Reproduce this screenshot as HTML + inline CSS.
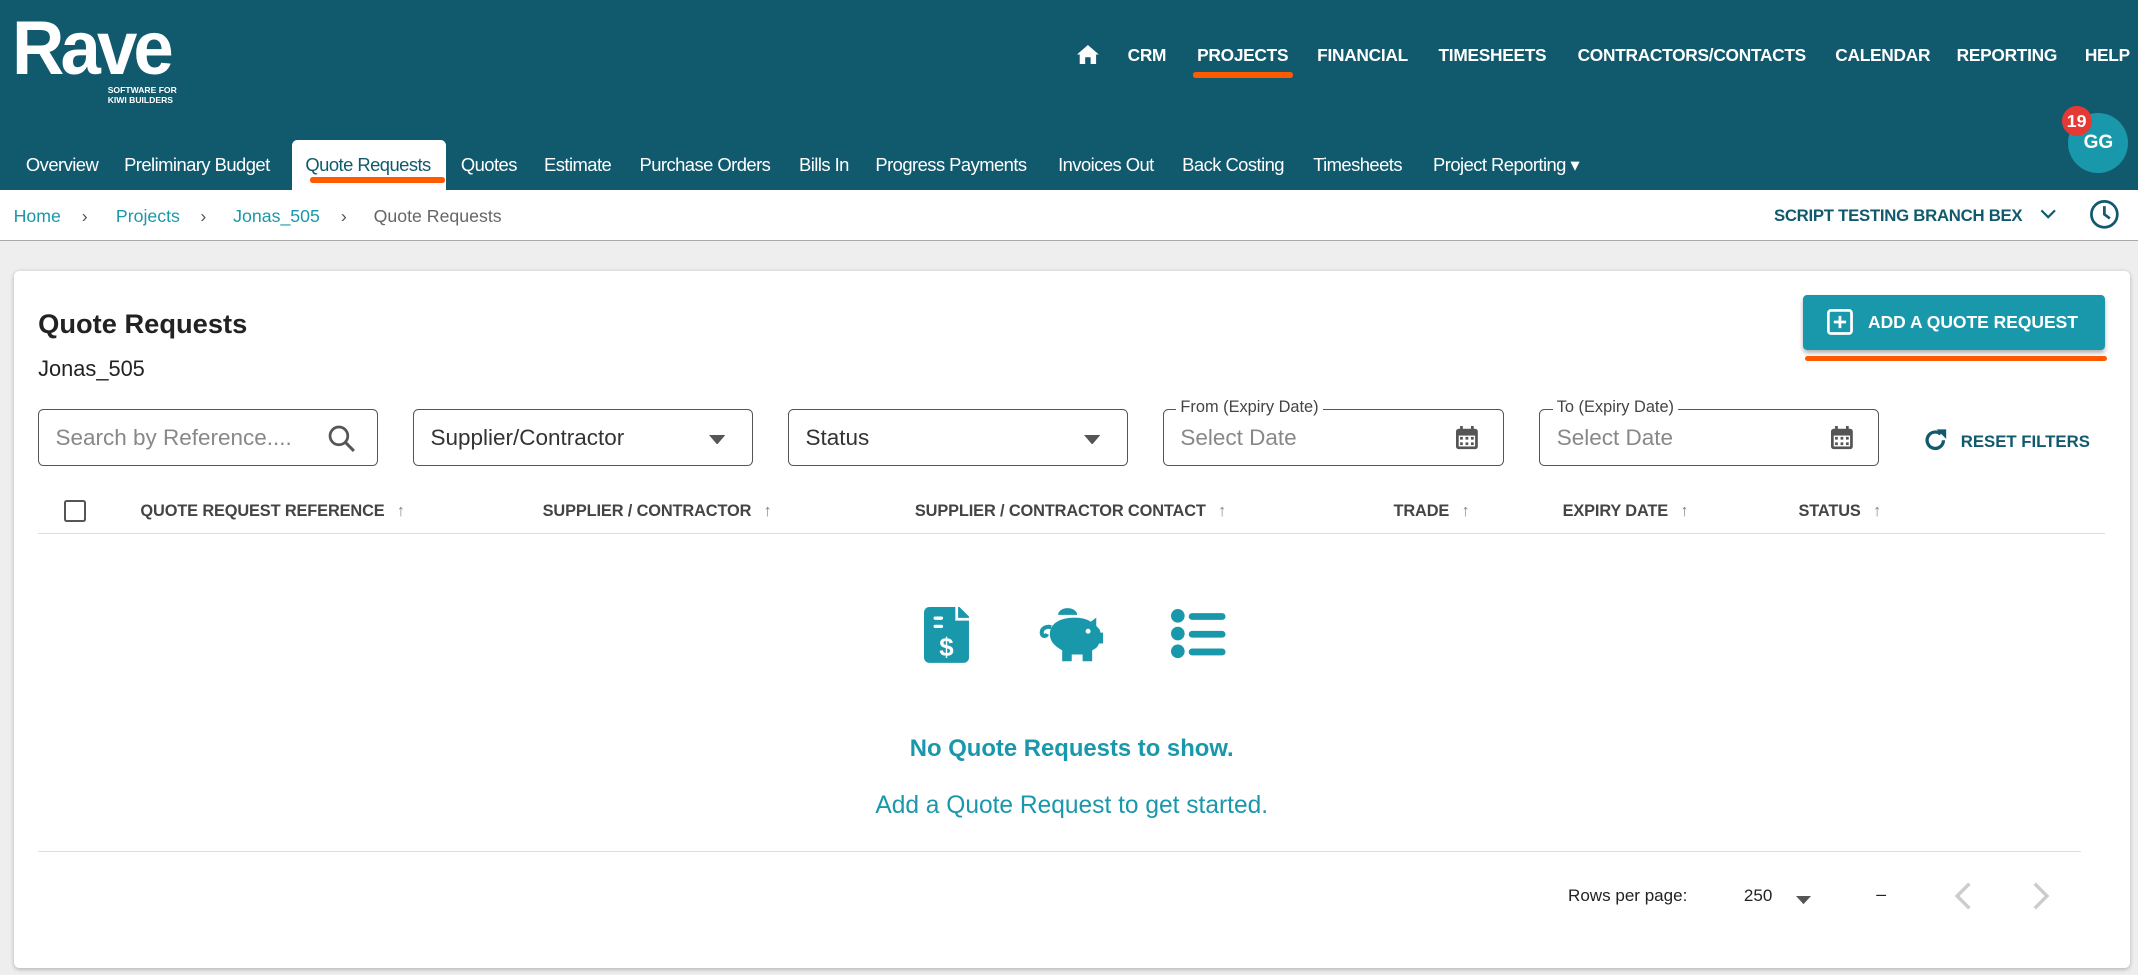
<!DOCTYPE html>
<html><head><meta charset="utf-8"><style>
html,body{margin:0;padding:0;overflow:hidden;background:#eee;}
#w{zoom:1.36352;width:1568px;height:715px;position:relative;font-family:"Liberation Sans",Arial,sans-serif;background:#eeeeee;}
.hdr{position:absolute;left:0;top:0;width:1568px;height:139px;background:#115a6e;color:#fff;}
.abs{position:absolute;}
.top a{position:absolute;top:33px;font-weight:bold;font-size:12.7px;color:#fff;letter-spacing:-0.2px}
.tab{position:absolute;top:113px;font-size:13.5px;color:#fff;letter-spacing:-0.4px}
.crumb{position:absolute;left:0;top:139px;width:1568px;height:37px;background:#fff;border-bottom:1px solid #aaa;font-size:13px;}
.card{position:absolute;left:10px;top:199px;width:1552px;height:511px;background:#fff;border-radius:4px;box-shadow:0 1px 3px rgba(0,0,0,.25);}
.inp{position:absolute;top:101px;height:42px;border:1px solid #555;border-radius:4px;box-sizing:border-box;font-size:16.5px;color:#333;}
.th{position:absolute;top:169px;font-size:12px;font-weight:bold;color:#444;letter-spacing:-0.1px}
.th span{color:#888;font-weight:normal;margin-left:9px}
</style></head><body><div id="w">
<div class="hdr">
 <div class="abs" style="left:9px;top:6px;font-size:56px;font-weight:bold;letter-spacing:-3px;line-height:60px;transform:scaleX(0.95);transform-origin:left">Rave</div>
 <div class="abs" style="left:79px;top:62px;font-size:6.3px;font-weight:bold;line-height:8px">SOFTWARE FOR<br>KIWI BUILDERS</div>
 <div class="top">
  <svg class="abs" style="left:790px;top:33px" width="16" height="14" viewBox="0 0 16 14"><path d="M8 0L0 7h2v7h4V9h4v5h4V7h2z" fill="#fff"/></svg>
  <a style="left:827px">CRM</a><a style="left:878px">PROJECTS</a><a style="left:966px">FINANCIAL</a><a style="left:1055px">TIMESHEETS</a><a style="left:1157px">CONTRACTORS/CONTACTS</a><a style="left:1346px">CALENDAR</a><a style="left:1435px">REPORTING</a><a style="left:1529px">HELP</a>
 </div>
 <div class="abs" style="left:875px;top:53px;width:73px;height:4px;background:#ff5a00;border-radius:2px"></div>
 <div class="abs" style="left:214px;top:103px;width:113px;height:36px;background:#fff;border-radius:4px 4px 0 0"></div>
 <div class="abs" style="left:227px;top:130px;width:99px;height:4px;background:#ff5a00;border-radius:2px"></div>
 <div class="tab" style="left:19px">Overview</div><div class="tab" style="left:91px">Preliminary Budget</div><div class="tab" style="left:224px;color:#115a6e">Quote Requests</div><div class="tab" style="left:338px">Quotes</div><div class="tab" style="left:399px">Estimate</div><div class="tab" style="left:469px">Purchase Orders</div><div class="tab" style="left:586px">Bills In</div><div class="tab" style="left:642px">Progress Payments</div><div class="tab" style="left:776px">Invoices Out</div><div class="tab" style="left:867px">Back Costing</div><div class="tab" style="left:963px">Timesheets</div><div class="tab" style="left:1051px">Project Reporting ▾</div>
 <div class="abs" style="left:1517px;top:83px;width:44px;height:44px;border-radius:50%;background:#1a98ab;font-weight:bold;font-size:14px;text-align:center;line-height:44px">GG</div>
 <div class="abs" style="left:1512px;top:78px;width:22px;height:22px;border-radius:50%;background:#e53935;font-weight:bold;font-size:13px;text-align:center;line-height:22px">19</div>
</div>
<div class="crumb">
 <div class="abs" style="left:10px;top:12px;color:#1a98ab">Home</div><div class="abs" style="left:60px;top:12px;color:#555">›</div>
 <div class="abs" style="left:85px;top:12px;color:#1a98ab">Projects</div><div class="abs" style="left:147px;top:12px;color:#555">›</div>
 <div class="abs" style="left:171px;top:12px;color:#1a98ab">Jonas_505</div><div class="abs" style="left:250px;top:12px;color:#555">›</div>
 <div class="abs" style="left:274px;top:12px;color:#666">Quote Requests</div>
 <div class="abs" style="left:1301px;top:12px;color:#115a6e;font-weight:bold;font-size:12.3px;letter-spacing:-0.2px">SCRIPT TESTING BRANCH BEX</div>
 <svg class="abs" style="left:1496px;top:14px" width="12" height="8"><path d="M1 1l5 5 5-5" stroke="#115a6e" stroke-width="1.6" fill="none"/></svg>
 <svg class="abs" style="left:1531px;top:6px" width="24" height="24"><circle cx="12" cy="12" r="9.5" stroke="#115a6e" stroke-width="2" fill="none"/><path d="M12 6v6l4 3" stroke="#115a6e" stroke-width="2" fill="none"/></svg>
</div>
<div class="card">
 <div class="abs" style="left:18px;top:27px;font-size:20px;font-weight:bold;color:#222">Quote Requests</div>
 <div class="abs" style="left:18px;top:62px;font-size:16px;color:#222">Jonas_505</div>
 <div class="abs" style="left:1312px;top:17px;width:222px;height:41px;background:#1a98ab;border-radius:3px;box-shadow:0 2px 3px rgba(0,0,0,.3);color:#fff;font-weight:bold;font-size:12.8px">
  <svg class="abs" style="left:18px;top:11px" width="19" height="19"><rect x="1" y="1" width="17" height="17" rx="2" stroke="#fff" stroke-width="2" fill="none"/><path d="M9.5 5v9M5 9.5h9" stroke="#fff" stroke-width="2"/></svg>
  <div class="abs" style="left:48px;top:13px">ADD A QUOTE REQUEST</div></div>
 <div class="abs" style="left:1314px;top:62px;width:221px;height:4px;background:#ff5a00;border-radius:2px"></div>
 <div class="inp" style="left:18px;width:249px"><span class="abs" style="left:12px;top:11px;color:#888">Search by Reference....</span>
  <svg class="abs" style="left:212px;top:11px" width="20" height="20"><circle cx="8" cy="8" r="6.5" stroke="#555" stroke-width="2" fill="none"/><path d="M13 13l6 6" stroke="#555" stroke-width="2.2"/></svg></div>
 <div class="inp" style="left:293px;width:249px"><span class="abs" style="left:12px;top:11px">Supplier/Contractor</span><svg class="abs" style="left:216px;top:18px" width="12" height="7"><path d="M0 0h12L6 7z" fill="#555"/></svg></div>
 <div class="inp" style="left:568px;width:249px"><span class="abs" style="left:12px;top:11px">Status</span><svg class="abs" style="left:216px;top:18px" width="12" height="7"><path d="M0 0h12L6 7z" fill="#555"/></svg></div>
 <div class="inp" style="left:843px;width:250px"><span class="abs" style="left:9px;top:-9px;font-size:12px;background:#fff;padding:0 3px;color:#444">From (Expiry Date)</span><span class="abs" style="left:12px;top:11px;color:#888">Select Date</span>
  <svg class="abs" style="left:214px;top:12px" width="16" height="17"><rect x="0" y="2" width="16" height="15" rx="2" fill="#555"/><path d="M4 0v4M12 0v4" stroke="#555" stroke-width="2"/><rect x="2" y="7" width="12" height="8" fill="#fff"/><g fill="#555"><rect x="3" y="8" width="2" height="2"/><rect x="7" y="8" width="2" height="2"/><rect x="11" y="8" width="2" height="2"/><rect x="3" y="12" width="2" height="2"/><rect x="7" y="12" width="2" height="2"/><rect x="11" y="12" width="2" height="2"/></g></svg></div>
 <div class="inp" style="left:1119px;width:249px"><span class="abs" style="left:9px;top:-9px;font-size:12px;background:#fff;padding:0 3px;color:#444">To (Expiry Date)</span><span class="abs" style="left:12px;top:11px;color:#888">Select Date</span>
  <svg class="abs" style="left:213px;top:12px" width="16" height="17"><rect x="0" y="2" width="16" height="15" rx="2" fill="#555"/><path d="M4 0v4M12 0v4" stroke="#555" stroke-width="2"/><rect x="2" y="7" width="12" height="8" fill="#fff"/><g fill="#555"><rect x="3" y="8" width="2" height="2"/><rect x="7" y="8" width="2" height="2"/><rect x="11" y="8" width="2" height="2"/><rect x="3" y="12" width="2" height="2"/><rect x="7" y="12" width="2" height="2"/><rect x="11" y="12" width="2" height="2"/></g></svg></div>
 <svg class="abs" style="left:1400px;top:115px" width="18" height="18"><path d="M15 9a6 6 0 1 1-2-4.5" stroke="#115a6e" stroke-width="2.4" fill="none"/><path d="M10 1h7v7z" fill="#115a6e"/></svg>
 <div class="abs" style="left:1428px;top:118px;font-size:12.3px;font-weight:bold;color:#115a6e">RESET FILTERS</div>
 <div class="abs" style="left:37px;top:168px;width:13px;height:13px;border:1.5px solid #555;border-radius:2px"></div>
 <div class="th" style="left:93px">QUOTE REQUEST REFERENCE<span>↑</span></div>
 <div class="th" style="left:388px">SUPPLIER / CONTRACTOR<span>↑</span></div>
 <div class="th" style="left:661px">SUPPLIER / CONTRACTOR CONTACT<span>↑</span></div>
 <div class="th" style="left:1012px">TRADE<span>↑</span></div>
 <div class="th" style="left:1136px">EXPIRY DATE<span>↑</span></div>
 <div class="th" style="left:1309px">STATUS<span>↑</span></div>
 <div class="abs" style="left:18px;top:192px;width:1516px;height:1px;background:#ddd"></div>
 <svg class="abs" style="left:668px;top:246px" width="33" height="41" viewBox="0 0 33 41">
  <path d="M4 0h22l7 7v30a4 4 0 0 1-4 4H4a4 4 0 0 1-4-4V4a4 4 0 0 1 4-4z" fill="#1a98ab"/>
  <path d="M24 0v9h9" fill="none" stroke="#fff" stroke-width="2"/>
  <rect x="7" y="7" width="7" height="2.4" rx="1.2" fill="#fff"/><rect x="7" y="13" width="7" height="2.4" rx="1.2" fill="#fff"/>
  <text x="16.5" y="36" font-size="19" font-weight="bold" fill="#fff" text-anchor="middle" font-family="Liberation Sans">$</text></svg>
 <svg class="abs" style="left:752px;top:244px" width="48" height="44" viewBox="0 0 48 44">
  <path d="M14 8a7 5 0 0 1 14 0z" fill="#1a98ab"/>
  <path d="M8 22c0-8 8-12 18-12 5 0 9 1 12 3l4-3v6c2 2 3 3 3 5h2v8h-3c-1 3-3 4-5 5v8h-7v-5h-8v5h-7v-8c-5-3-9-6-9-12z" fill="#1a98ab"/>
  <path d="M9 17c-4-1-7 1-7 4s3 3 4 1" stroke="#1a98ab" stroke-width="3" fill="none"/>
  <circle cx="36" cy="20" r="1.8" fill="#fff"/></svg>
 <svg class="abs" style="left:849px;top:248px" width="40" height="36"><g fill="#1a98ab"><circle cx="5" cy="5" r="5"/><circle cx="5" cy="18" r="5"/><circle cx="5" cy="31" r="5"/><rect x="13" y="3" width="27" height="5" rx="2.5"/><rect x="13" y="16" width="27" height="5" rx="2.5"/><rect x="13" y="29" width="27" height="5" rx="2.5"/></g></svg>
 <div class="abs" style="left:0;width:1552px;top:340px;text-align:center;font-size:17.5px;font-weight:bold;color:#1a98ab">No Quote Requests to show.</div>
 <div class="abs" style="left:0;width:1552px;top:382px;text-align:center;font-size:18px;color:#1a98ab">Add a Quote Request to get started.</div>
 <div class="abs" style="left:18px;top:425px;width:1498px;height:1px;background:#ddd"></div>
 <div class="abs" style="left:1140px;top:451px;font-size:12.5px;color:#222">Rows per page:</div>
 <div class="abs" style="left:1269px;top:451px;font-size:12.5px;color:#222">250</div>
 <svg class="abs" style="left:1307px;top:458px" width="11" height="6"><path d="M0 0h11L5.5 6z" fill="#555"/></svg>
 <div class="abs" style="left:1366px;top:449px;font-size:13px;color:#222">–</div>
 <svg class="abs" style="left:1422px;top:447px" width="14" height="22"><path d="M12 2L3 11l9 9" stroke="#ccc" stroke-width="2.5" fill="none"/></svg>
 <svg class="abs" style="left:1480px;top:447px" width="14" height="22"><path d="M2 2l9 9-9 9" stroke="#ccc" stroke-width="2.5" fill="none"/></svg>
</div>
</div></body></html>
